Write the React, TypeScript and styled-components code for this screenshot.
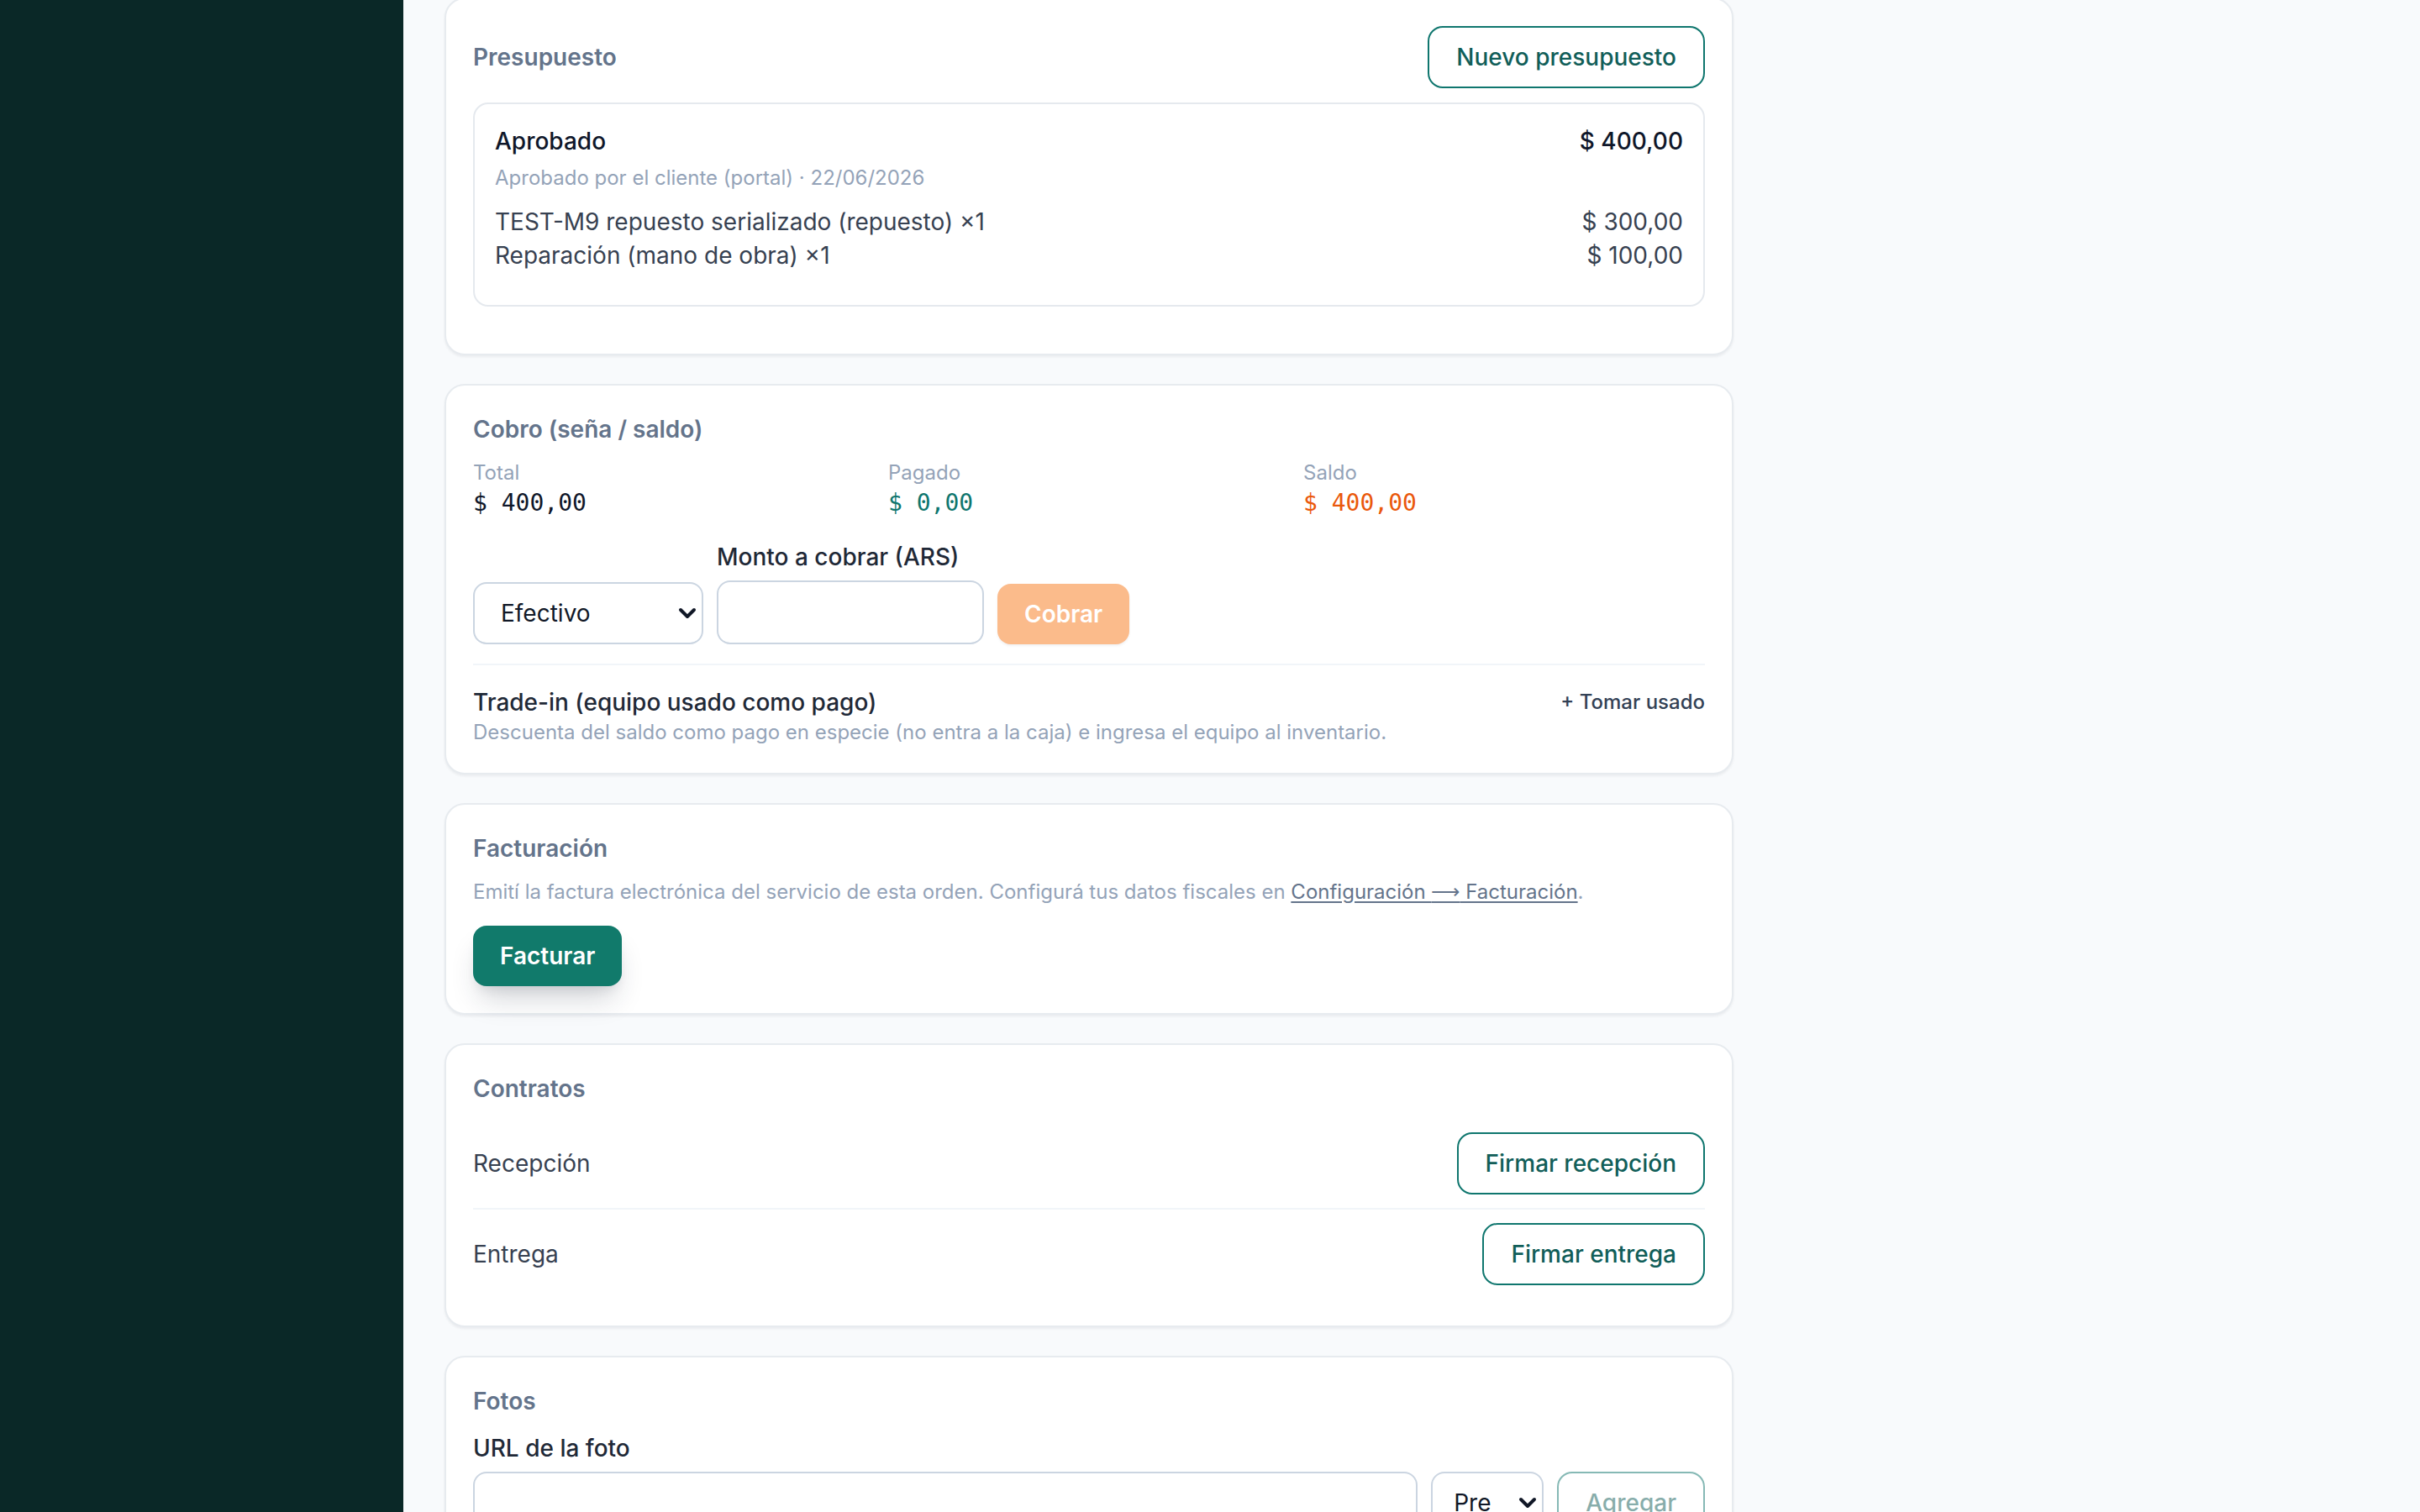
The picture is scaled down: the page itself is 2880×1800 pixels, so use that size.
import React from "react";
import styled, { createGlobalStyle } from "styled-components";

const GlobalStyle = createGlobalStyle`
  html, body {
    margin: 0;
    padding: 0;
    overflow: hidden;
    background: #f8fafc;
    font-family: Inter, "Noto Sans", "Liberation Sans", sans-serif;
  }
  * {
    box-sizing: border-box;
  }
`;

const Shell = styled.div`
  display: flex;
  min-height: 100vh;
`;

const Sidebar = styled.aside`
  width: 480px;
  flex-shrink: 0;
  background: #0a2827;
`;

const Main = styled.main`
  flex: 1;
  padding: 0 48px 0 49px;
  background: #f8fafc;
`;

const Column = styled.div`
  width: 1534px;
  margin-top: -3px;
  display: flex;
  flex-direction: column;
  gap: 34px;
`;

const Card = styled.section`
  background: #fff;
  border: 2px solid #e7ebef;
  border-radius: 24px;
  padding: 32px;
  box-shadow: 0 2px 3px rgba(15, 23, 42, 0.06);
`;

const CardTitle = styled.h2`
  margin: 0;
  font-size: 28px;
  line-height: 40px;
  font-weight: 600;
  color: #64748b;
`;

const HeaderRow = styled.div`
  display: flex;
  align-items: center;
  justify-content: space-between;
`;

const OutlineButton = styled.button`
  font-family: inherit;
  font-size: 28px;
  line-height: 40px;
  font-weight: 500;
  color: #115e59;
  background: #fff;
  border: 2px solid #0f766e;
  border-radius: 18px;
  padding: 15px 32px;
  cursor: pointer;
  opacity: ${({ disabled }) => (disabled ? 0.5 : 1)};
`;

const QuoteBox = styled.div`
  margin: 17px 0 24px;
  border: 2px solid #e5e9ee;
  border-radius: 18px;
  padding: 24px 24px 39px;
`;

const SpreadRow = styled.div<{ $tone?: "strong" | "normal" }>`
  display: flex;
  justify-content: space-between;
  font-size: 28px;
  line-height: 40px;
  font-weight: ${({ $tone }) => ($tone === "strong" ? 500 : 400)};
  color: ${({ $tone }) => ($tone === "strong" ? "#0f172a" : "#374151")};
`;

const Muted = styled.div<{ $gap?: number }>`
  margin-top: ${({ $gap }) => $gap ?? 0}px;
  font-size: 24px;
  line-height: 32px;
  color: #94a3b8;

  a {
    color: #64748b;
    text-decoration: underline;
    text-underline-offset: 3px;
  }
`;

const Arrow = styled.span`
  font-family: "DejaVu Sans", sans-serif;
  font-weight: 300;
`;

const Lines = styled.div`
  margin-top: 16px;
`;

const StatGrid = styled.div`
  margin-top: 16px;
  display: grid;
  grid-template-columns: repeat(3, 1fr);
  gap: 16px;
`;

const StatValue = styled.div<{ $color: string }>`
  font-family: "DejaVu Sans Mono", "Liberation Mono", monospace;
  font-size: 28px;
  line-height: 40px;
  color: ${({ $color }) => $color};
`;

const PayRow = styled.div`
  margin-top: 24px;
  display: flex;
  align-items: flex-end;
  gap: 16px;
`;

const Field = styled.label`
  display: flex;
  flex-direction: column;
  gap: 8px;
`;

const FieldLabel = styled.span<{ $gap?: number }>`
  display: block;
  margin-top: ${({ $gap }) => $gap ?? 0}px;
  font-size: 28px;
  line-height: 40px;
  font-weight: 500;
  color: #1f2937;
`;

const SelectWrap = styled.div<{ $w: number; $h: number }>`
  position: relative;
  width: ${({ $w }) => $w}px;
  height: ${({ $h }) => $h}px;
  flex-shrink: 0;

  svg {
    position: absolute;
    right: 8px;
    top: 50%;
    transform: translateY(-50%);
    pointer-events: none;
  }
`;

const Select = styled.select<{ $pl: number; $pr: number }>`
  appearance: none;
  width: 100%;
  height: 100%;
  font-family: inherit;
  font-size: 28px;
  color: #111827;
  background: #fff;
  border: 2px solid #cbd5e1;
  border-radius: 16px;
  padding: 0 ${({ $pr }) => $pr}px 0 ${({ $pl }) => $pl}px;
`;

const TextInput = styled.input<{ $w?: number }>`
  ${({ $w }) => ($w ? `width: ${$w}px;` : "flex: 1;")}
  height: 76px;
  font-family: inherit;
  font-size: 28px;
  border: 2px solid #cbd5e1;
  border-radius: 16px;
  background: #fff;
  padding: 0 24px;
`;

const SolidButton = styled.button<{ $tone: "teal" | "orange" }>`
  font-family: inherit;
  font-size: 28px;
  line-height: 40px;
  font-weight: 600;
  color: #fff;
  border: none;
  border-radius: 16px;
  padding: 16px 32px;
  cursor: pointer;
  background: ${({ $tone }) => ($tone === "teal" ? "#117a6b" : "#fbbb8b")};
  box-shadow: ${({ $tone }) =>
    $tone === "teal"
      ? "0 22px 34px -8px rgba(30, 41, 59, 0.2), 0 8px 14px -6px rgba(30, 41, 59, 0.12)"
      : "0 2px 3px rgba(15, 23, 42, 0.06)"};
`;

const ButtonBar = styled.div`
  margin-top: 24px;
`;

const TradeIn = styled.div`
  margin-top: 23px;
  padding-top: 24px;
  border-top: 2px solid #f1f5f9;
  display: flex;
  justify-content: space-between;
  align-items: flex-start;
`;

const TradeTitle = styled.div`
  font-size: 28px;
  line-height: 40px;
  font-weight: 500;
  color: #1f2937;
`;

const LinkButton = styled.button`
  font-family: inherit;
  font-size: 24px;
  line-height: 40px;
  font-weight: 500;
  color: #334155;
  background: none;
  border: none;
  padding: 0;
  cursor: pointer;
`;

const ContractList = styled.div`
  margin-top: 16px;
`;

const ContractRow = styled.div`
  display: flex;
  align-items: center;
  justify-content: space-between;
  padding: 16px 0;
  font-size: 28px;
  line-height: 40px;
  color: #374151;

  & + & {
    border-top: 2px solid #f1f5f9;
  }
`;

const PhotoRow = styled.div`
  margin-top: 8px;
  display: flex;
  align-items: flex-start;
  gap: 16px;
`;

const Chevron = () => (
  <svg width="22" height="14" viewBox="0 0 22 14" fill="none">
    <path d="M3 3l8 8 8-8" stroke="#111827" strokeWidth="4" strokeLinecap="round" strokeLinejoin="round" />
  </svg>
);

const App = () => {
  return (
    <Shell>
      <GlobalStyle />
      <Sidebar />
      <Main>
        <Column>
          <Card>
            <HeaderRow>
              <CardTitle>Presupuesto</CardTitle>
              <OutlineButton>Nuevo presupuesto</OutlineButton>
            </HeaderRow>
            <QuoteBox>
              <SpreadRow $tone="strong">
                <span>Aprobado</span>
                <span>$ 400,00</span>
              </SpreadRow>
              <Muted $gap={8}>Aprobado por el cliente (portal) · 22/06/2026</Muted>
              <Lines>
                <SpreadRow>
                  <span>TEST-M9 repuesto serializado (repuesto) ×1</span>
                  <span>$ 300,00</span>
                </SpreadRow>
                <SpreadRow>
                  <span>Reparación (mano de obra) ×1</span>
                  <span>$ 100,00</span>
                </SpreadRow>
              </Lines>
            </QuoteBox>
          </Card>

          <Card>
            <CardTitle>Cobro (seña / saldo)</CardTitle>
            <StatGrid>
              <div>
                <Muted>Total</Muted>
                <StatValue $color="#0f172a">$ 400,00</StatValue>
              </div>
              <div>
                <Muted>Pagado</Muted>
                <StatValue $color="#0f766e">$ 0,00</StatValue>
              </div>
              <div>
                <Muted>Saldo</Muted>
                <StatValue $color="#ea580c">$ 400,00</StatValue>
              </div>
            </StatGrid>
            <PayRow>
              <SelectWrap $w={274} $h={74}>
                <Select $pl={31} $pr={48} defaultValue="efectivo">
                  <option value="efectivo">Efectivo</option>
                  <option value="transferencia">Transferencia</option>
                  <option value="tarjeta">Tarjeta</option>
                </Select>
                <Chevron />
              </SelectWrap>
              <Field>
                <FieldLabel>Monto a cobrar (ARS)</FieldLabel>
                <TextInput $w={318} />
              </Field>
              <SolidButton $tone="orange" disabled>Cobrar</SolidButton>
            </PayRow>
            <TradeIn>
              <div>
                <TradeTitle>Trade-in (equipo usado como pago)</TradeTitle>
                <Muted>Descuenta del saldo como pago en especie (no entra a la caja) e ingresa el equipo al inventario.</Muted>
              </div>
              <LinkButton>+ Tomar usado</LinkButton>
            </TradeIn>
          </Card>

          <Card>
            <CardTitle>Facturación</CardTitle>
            <Muted $gap={16}>
              Emití la factura electrónica del servicio de esta orden. Configurá tus datos fiscales en{" "}
              <a href="#">Configuración <Arrow>⟶</Arrow> Facturación</a>.
            </Muted>
            <ButtonBar>
              <SolidButton $tone="teal">Facturar</SolidButton>
            </ButtonBar>
          </Card>

          <Card>
            <CardTitle>Contratos</CardTitle>
            <ContractList>
              <ContractRow>
                <span>Recepción</span>
                <OutlineButton>Firmar recepción</OutlineButton>
              </ContractRow>
              <ContractRow>
                <span>Entrega</span>
                <OutlineButton>Firmar entrega</OutlineButton>
              </ContractRow>
            </ContractList>
          </Card>

          <Card>
            <CardTitle>Fotos</CardTitle>
            <FieldLabel $gap={16}>URL de la foto</FieldLabel>
            <PhotoRow>
              <TextInput />
              <SelectWrap $w={134} $h={74}>
                <Select $pl={25} $pr={60} defaultValue="pre">
                  <option value="pre">Pre-reparación</option>
                  <option value="post">Post-reparación</option>
                </Select>
                <Chevron />
              </SelectWrap>
              <OutlineButton disabled>Agregar</OutlineButton>
            </PhotoRow>
          </Card>
        </Column>
      </Main>
    </Shell>
  );
};

export default App;
